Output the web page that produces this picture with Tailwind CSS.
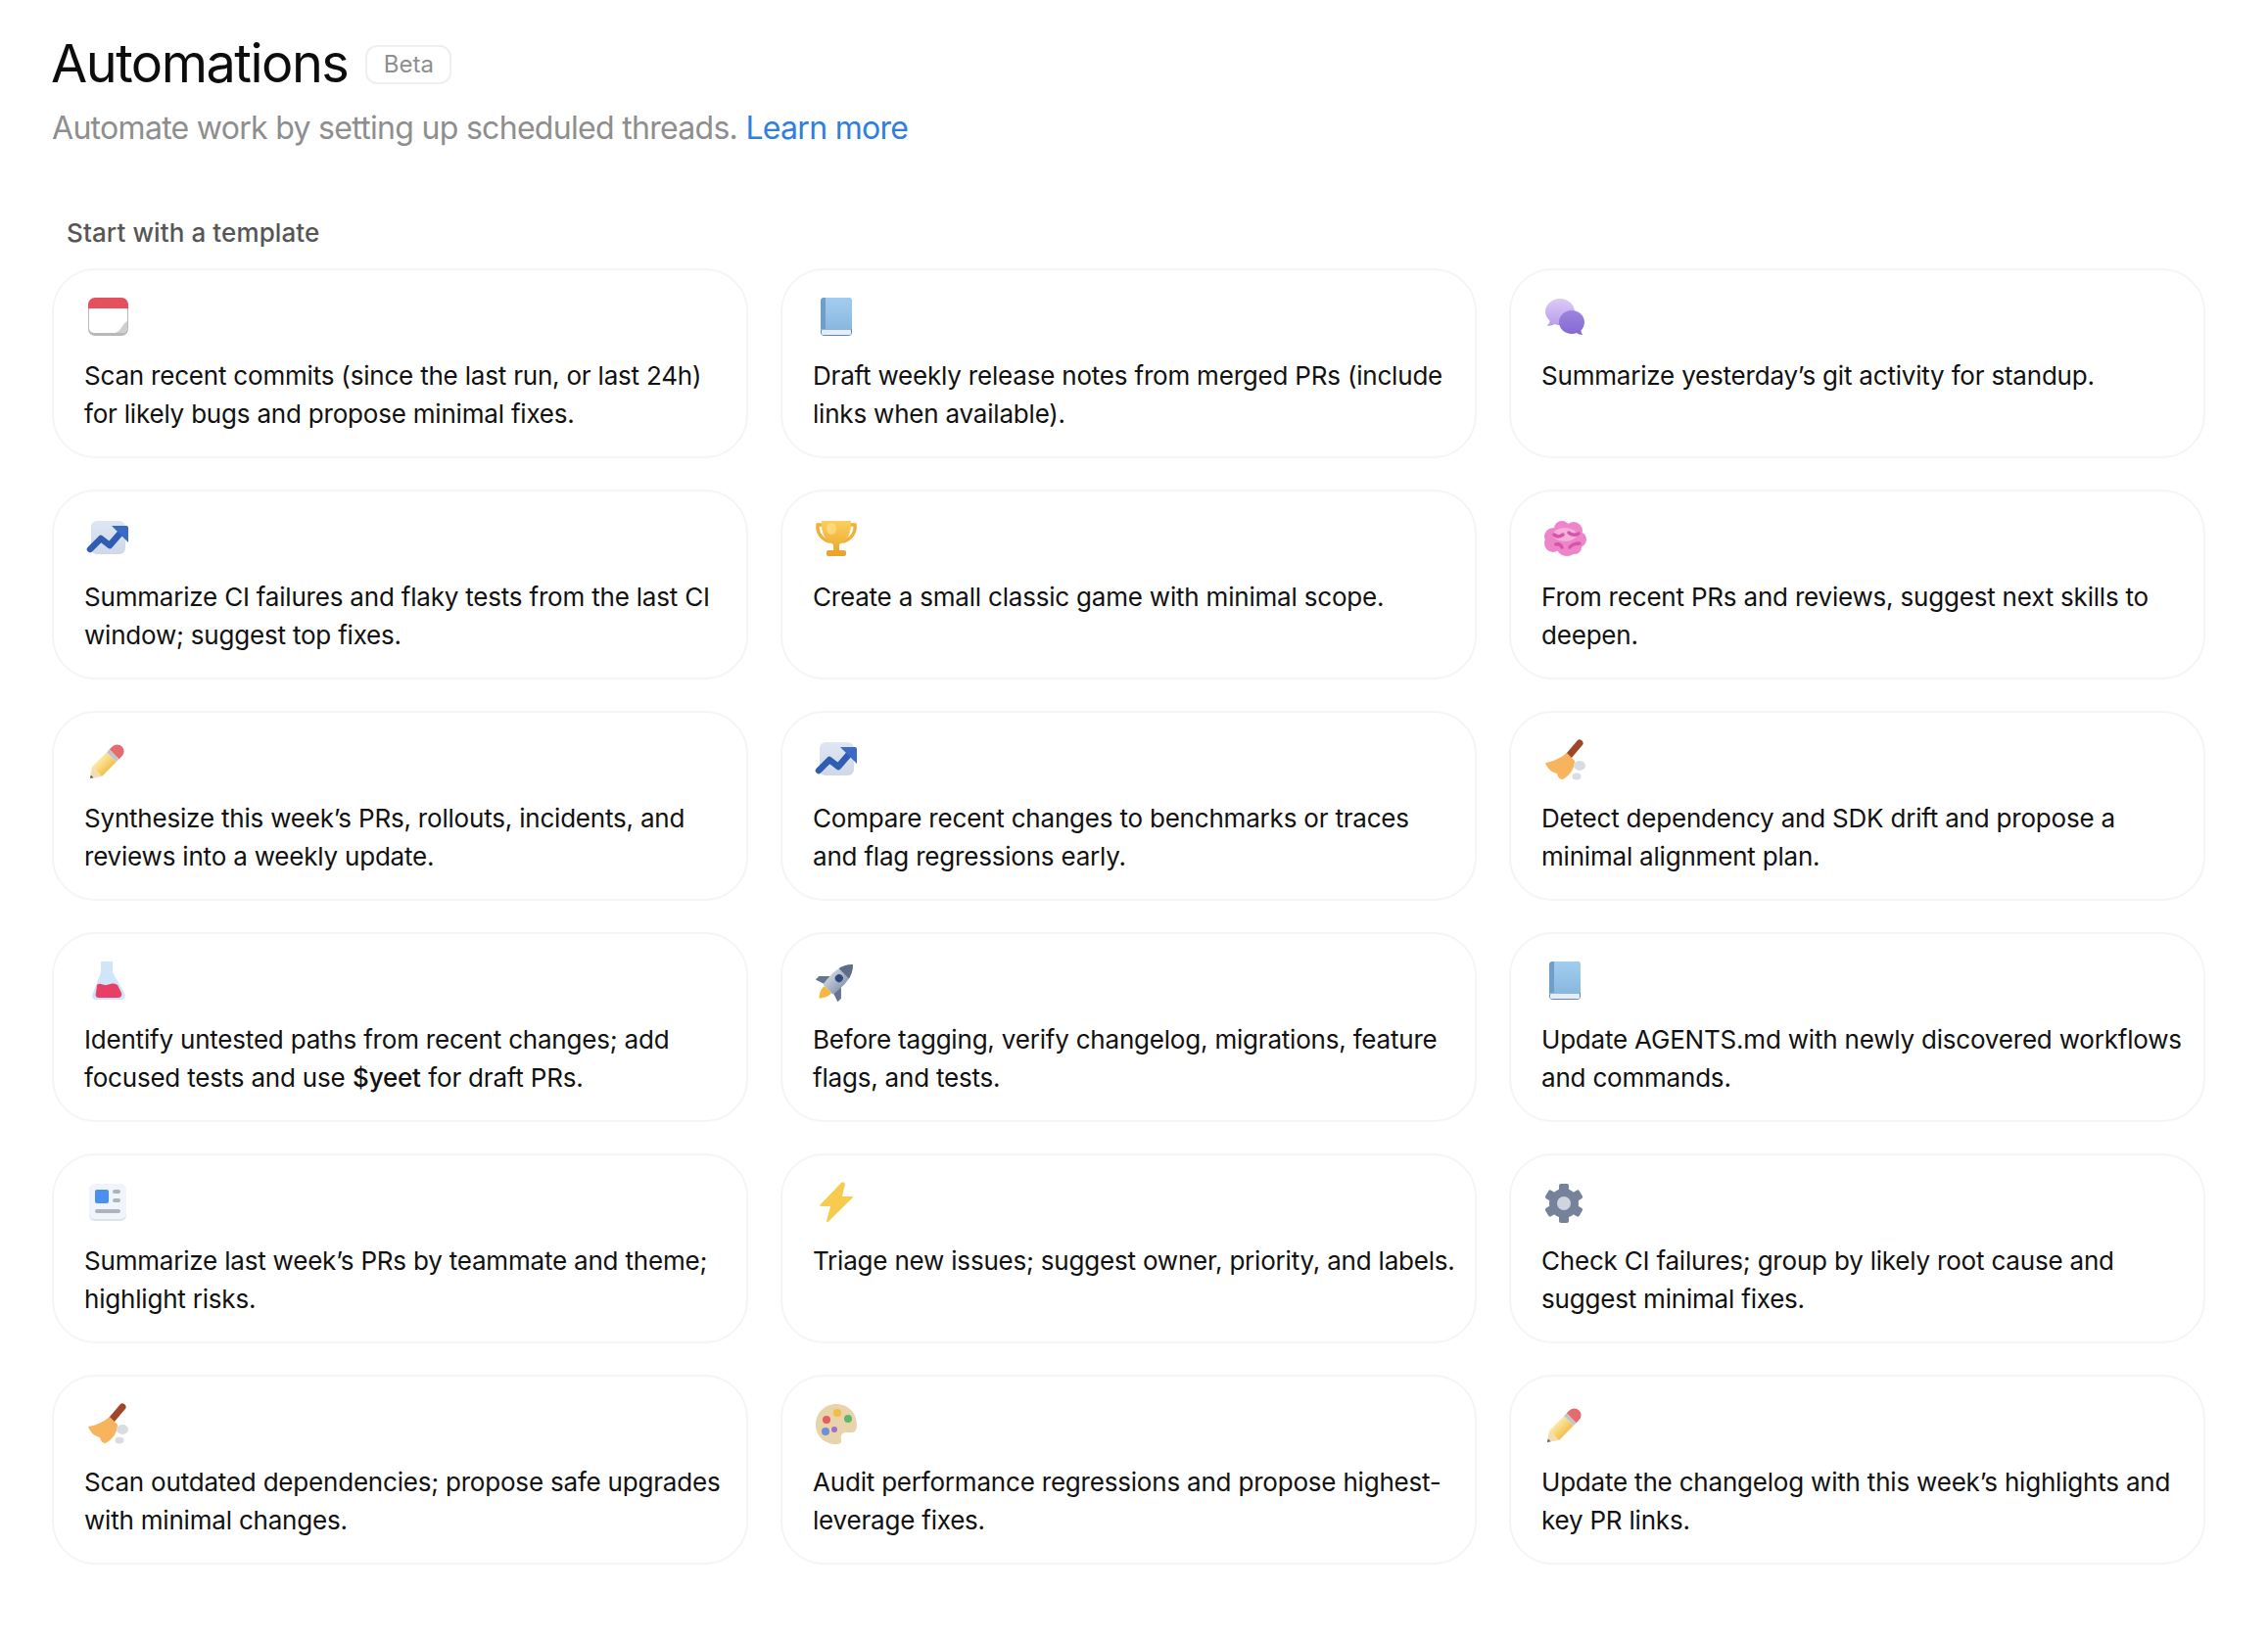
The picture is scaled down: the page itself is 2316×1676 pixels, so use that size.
<!doctype html>
<html>

<head>
    <meta charset="UTF-8">
    <title>Automations</title>
    <script src="https://cdn.jsdelivr.net/npm/@tailwindcss/browser@4"></script>
</head>

<body class="bg-white font-['Inter','Noto_Sans',sans-serif] text-[#111]">

    <!-- shared emoji drawings -->
    <svg class="absolute w-0 h-0" aria-hidden="true">
        <defs>
            <linearGradient id="g-book" x1="0" y1="0" x2="0" y2="1"><stop offset="0" stop-color="#a3cdef"/><stop offset="1" stop-color="#86b6de"/></linearGradient>
            <linearGradient id="g-trend" x1="0" y1="0" x2="0" y2="1"><stop offset="0" stop-color="#dfe6f3"/><stop offset="1" stop-color="#cfd8e8"/></linearGradient>
            <linearGradient id="g-gold" x1="0" y1="0" x2="0" y2="1"><stop offset="0" stop-color="#fbcf5c"/><stop offset="1" stop-color="#eda92f"/></linearGradient>
            <linearGradient id="g-pencil" x1="0" y1="0" x2="0" y2="1"><stop offset="0" stop-color="#fde9a4"/><stop offset="1" stop-color="#f2c050"/></linearGradient>
            <linearGradient id="g-bubble" x1="0" y1="0" x2="0" y2="1"><stop offset="0" stop-color="#dccbf7"/><stop offset="1" stop-color="#b89ceb"/></linearGradient>
            <linearGradient id="g-bubble2" x1="0" y1="0" x2="0" y2="1"><stop offset="0" stop-color="#9d84e0"/><stop offset="1" stop-color="#8468d2"/></linearGradient>
            <linearGradient id="g-rocket" x1="0" y1="0" x2="1" y2="0"><stop offset="0" stop-color="#c5cfdd"/><stop offset="1" stop-color="#8e9cb3"/></linearGradient>

            <symbol id="i-calendar" viewBox="0 0 48 48">
                <rect x="4" y="5" width="41" height="38" rx="7" fill="#b9b9bc"/>
                <rect x="5" y="12" width="39" height="28" rx="5" fill="#fff"/>
                <path d="M44 28v7a5 5 0 0 1-5 5h-8c7-1 7-9 13-12z" fill="#cfcfd3"/>
                <path d="M4 15v-4a7 7 0 0 1 7-7h27a7 7 0 0 1 7 7v4z" fill="#e5505f"/>
            </symbol>
            <symbol id="i-book" viewBox="0 0 48 48">
                <rect x="8" y="4" width="32" height="39" rx="4" fill="#5f86ac"/>
                <rect x="9" y="36" width="30" height="6" rx="1.500" fill="#e6edf4"/>
                <path d="M8 35V8a4 4 0 0 1 4-4h24a4 4 0 0 1 4 4v27a2 2 0 0 1-2 2H10a2 2 0 0 0-2 2z" fill="url(#g-book)"/>
                <path d="M8 37V8a4 4 0 0 1 4-4h1v32h-3a2 2 0 0 0-2 1z" fill="#6f9fc9"/>
            </symbol>
            <symbol id="i-chat" viewBox="0 0 48 48">
                <path d="M19 5c8 0 15 6 15 13.500S27 32 19 32c-2 0-4-.4-5.500-1-2 1.500-5 2-8 1.500 2-1 3-3 3-5C6 25 4 22 4 18.500 4 11 11 5 19 5z" fill="url(#g-bubble)"/>
                <path d="M31 17c7 0 13 5 13 12 0 3.500-1.500 6.500-3.500 8.500 0 1.500.5 3 2 4.500-3 0-5-.8-6.500-2-1.500.5-3.200 1-5 1-7 0-13-5.500-13-12s6-12 13-12z" fill="url(#g-bubble2)"/>
            </symbol>
            <symbol id="i-trend" viewBox="0 0 48 48">
                <rect x="7" y="6" width="35" height="34" rx="6" fill="url(#g-trend)"/>
                <path d="M6 35 17 24l9 7 13-15" fill="none" stroke="#2f5db3" stroke-width="6.500" stroke-linecap="round" stroke-linejoin="round"/>
                <path d="M28 11h15a2 2 0 0 1 2 2v15z" fill="#3a6ac6"/>
            </symbol>
            <symbol id="i-trophy" viewBox="0 0 48 48">
                <path d="M12 10H5c-1 8 4 15 12 17M36 10h7c1 8-4 15-12 17" fill="none" stroke="#eeb23c" stroke-width="3.500" stroke-linecap="round"/>
                <path d="M9 6h30c1 12-4 21-12 24v7h-6v-7C13 27 8 18 9 6z" fill="url(#g-gold)"/>
                <ellipse cx="19" cy="14" rx="5" ry="6" fill="#fde08f" opacity="0.7"/>
                <rect x="14" y="36" width="20" height="6" rx="2" fill="#e9a52f"/>
            </symbol>
            <symbol id="i-brain" viewBox="0 0 48 48">
                <g fill="#ee85c8">
                    <circle cx="12" cy="22" r="9"/>
                    <circle cx="21" cy="14" r="8"/>
                    <circle cx="33" cy="16" r="9"/>
                    <circle cx="38" cy="25" r="8"/>
                    <circle cx="12" cy="29" r="9"/>
                    <circle cx="26" cy="31" r="11"/>
                    <circle cx="34" cy="33" r="7"/>
                </g>
                <ellipse cx="24" cy="20" rx="12" ry="7" fill="#f6aedb"/>
                <path d="M13 20c4 3 6 2 9 0M15 30c3-1 5 1 6 3M29 33c3-4 7-4 10-4M28 18c3 3 6 3 10 1" fill="none" stroke="#d455a9" stroke-width="3.500" stroke-linecap="round"/>
            </symbol>
            <symbol id="i-pencil" viewBox="0 0 48 48">
                <g transform="translate(6 43) rotate(-45)">
                    <path d="M0 0 10-7v14z" fill="#f3dcb0"/>
                    <path d="M0 0 3-2v4z" fill="#5d6068"/>
                    <rect x="10" y="-7" width="21" height="14" fill="url(#g-pencil)"/>
                    <rect x="31" y="-7" width="4" height="14" fill="#c3c5c9"/>
                    <path d="M35-7h4a7 7 0 0 1 7 7 7 7 0 0 1-7 7h-4z" fill="#e46c70"/>
                </g>
            </symbol>
            <symbol id="i-broom" viewBox="0 0 48 48">
                <path d="M39 7 28 20" stroke="#a0472a" stroke-width="7" stroke-linecap="round" fill="none"/>
                <path d="M4 27c8-1 16-5 22-10l8 8c0 8-5 15-12 19-4 0-5-3-6-6-5-1-10-5-12-11z" fill="#f7b45c"/>
                <ellipse cx="39" cy="30" rx="6" ry="5" fill="#d8dde4"/>
                <ellipse cx="36" cy="41" rx="4.500" ry="3.500" fill="#d8dde4"/>
            </symbol>
            <symbol id="i-flask" viewBox="0 0 48 48">
                <path d="M17 4h12v11l12 21c2 4 0 7-4 7H13c-4 0-6-3-4-7l8-21z" fill="#cfe6f8"/>
                <path d="M13 28c4-3 6 1 10 0s6-3 11 0l4 8c1 3-1 5-3 5H15c-3 0-4-2-3-5z" fill="#e83f68"/>
            </symbol>
            <symbol id="i-rocket" viewBox="0 0 48 48">
                <g transform="translate(24 24) rotate(45)">
                    <path d="M-5 12c-1 6 3 10 5 13 2-3 6-7 5-13z" fill="#f6b73c"/>
                    <path d="M-7 0-16 9l0 5 9-3z" fill="#66758f"/>
                    <path d="M7 0 16 9l0 5-9-3z" fill="#66758f"/>
                    <path d="M0-24C8-16 10-4 7 12H-7C-10-4-8-16 0-24z" fill="url(#g-rocket)"/>
                    <path d="M0-24c4 4 6 8 7.400 13H-7.400C-6-16-4-20 0-24z" fill="#5f6e88"/>
                    <circle cx="0" cy="-4" r="4" fill="#2f4a7a"/>
                </g>
            </symbol>
            <symbol id="i-news" viewBox="0 0 48 48">
                <rect x="5" y="6" width="38" height="37" rx="6" fill="#dfe3ec"/>
                <rect x="5" y="5" width="38" height="36" rx="6" fill="#f1f4fa"/>
                <rect x="11" y="11" width="14" height="14" rx="2" fill="#4a90ee"/>
                <rect x="29" y="11" width="8" height="4" rx="2" fill="#aeb4bf"/>
                <rect x="29" y="20" width="8" height="4" rx="2" fill="#aeb4bf"/>
                <rect x="11" y="31" width="26" height="4" rx="2" fill="#aeb4bf"/>
            </symbol>
            <symbol id="i-bolt" viewBox="0 0 48 48">
                <path d="M29 4 8 26a1 1 0 0 0 1 2h9l-4 15c0 1 1 1.500 2 .5L40 20a1 1 0 0 0-1-2h-9l3-13c0-1-3-2-4-1z" fill="#f7cb4d"/>
            </symbol>
            <symbol id="i-gear" viewBox="0 0 48 48">
                <g fill="#76829a" transform="translate(23 25)">
                    <circle r="15"/>
                    <rect x="-5" y="-20" width="10" height="9" rx="2"/>
                    <rect x="-5" y="-20" width="10" height="9" rx="2" transform="rotate(60)"/>
                    <rect x="-5" y="-20" width="10" height="9" rx="2" transform="rotate(120)"/>
                    <rect x="-5" y="-20" width="10" height="9" rx="2" transform="rotate(180)"/>
                    <rect x="-5" y="-20" width="10" height="9" rx="2" transform="rotate(240)"/>
                    <rect x="-5" y="-20" width="10" height="9" rx="2" transform="rotate(300)"/>
                    <circle r="7" fill="#cfd5df"/>
                </g>
            </symbol>
            <symbol id="i-palette" viewBox="0 0 48 48">
                <path d="M24 4C12 4 3 13 3 25s9 20 21 20c4 0 6-2 5-5-1-4 1-7 5-7h6c3 0 5-3 5-8C45 13 36 4 24 4z" fill="#e8d3ab"/>
                <circle cx="14" cy="20" r="4" fill="#e2605f"/>
                <circle cx="25" cy="13" r="4" fill="#f2bd45"/>
                <circle cx="36" cy="19" r="4" fill="#5fb56b"/>
                <circle cx="13" cy="32" r="4" fill="#6a8fdc"/>
                <circle cx="22" cy="30" r="3" fill="#a36bd0"/>
            </symbol>
        </defs>
    </svg>

    <div class="pl-[53px] pr-[64px] pt-[28px]">

        <div class="flex items-center gap-[18px] h-[74px]">
            <h1 class="-ml-[1px] text-[54px] leading-none font-normal tracking-[-1.5px] text-[#0d0d0d]">Automations</h1>
            <span class="mt-[2px] flex items-center justify-center w-[88px] h-[40px] rounded-[12px] border-2 border-[#efefef] text-[24px] text-[#8f8f8f]">Beta</span>
        </div>

        <p class="mt-[7px] text-[32px] leading-[44px] tracking-[-0.7px] text-[#8e8e8e]">Automate work by setting up scheduled threads. <a href="#" class="text-[#2f7ee0]">Learn more</a></p>

        <h2 class="mt-[67px] ml-[15px] text-[26px] leading-[36px] font-medium tracking-[0.1px] text-[#565656]">Start with a template</h2>

        <div class="mt-[18px] grid grid-cols-3 gap-x-[33px] gap-y-[32px] text-[26px] leading-[39px] tracking-[-0.2px]">

            <div class="h-[194px] rounded-[44px] border-2 border-[#f5f5f5] pl-[31px] pr-[20px] pt-[24px]">
                <svg class="w-[48px] h-[48px] blur-[0.4px]"><use href="#i-calendar"/></svg>
                <p class="mt-[16px]">Scan recent commits (since the last run, or last 24h) for likely bugs and propose minimal fixes.</p>
            </div>
            <div class="h-[194px] rounded-[44px] border-2 border-[#f5f5f5] pl-[31px] pr-[20px] pt-[24px]">
                <svg class="w-[48px] h-[48px] blur-[0.4px]"><use href="#i-book"/></svg>
                <p class="mt-[16px]">Draft weekly release notes from merged PRs (include links when available).</p>
            </div>
            <div class="h-[194px] rounded-[44px] border-2 border-[#f5f5f5] pl-[31px] pr-[20px] pt-[24px]">
                <svg class="w-[48px] h-[48px] blur-[0.4px]"><use href="#i-chat"/></svg>
                <p class="mt-[16px]">Summarize yesterday’s git activity for standup.</p>
            </div>

            <div class="h-[194px] rounded-[44px] border-2 border-[#f5f5f5] pl-[31px] pr-[20px] pt-[24px]">
                <svg class="w-[48px] h-[48px] blur-[0.4px]"><use href="#i-trend"/></svg>
                <p class="mt-[16px]">Summarize CI failures and flaky tests from the last CI window; suggest top fixes.</p>
            </div>
            <div class="h-[194px] rounded-[44px] border-2 border-[#f5f5f5] pl-[31px] pr-[20px] pt-[24px]">
                <svg class="w-[48px] h-[48px] blur-[0.4px]"><use href="#i-trophy"/></svg>
                <p class="mt-[16px]">Create a small classic game with minimal scope.</p>
            </div>
            <div class="h-[194px] rounded-[44px] border-2 border-[#f5f5f5] pl-[31px] pr-[20px] pt-[24px]">
                <svg class="w-[48px] h-[48px] blur-[0.4px]"><use href="#i-brain"/></svg>
                <p class="mt-[16px]">From recent PRs and reviews, suggest next skills to deepen.</p>
            </div>

            <div class="h-[194px] rounded-[44px] border-2 border-[#f5f5f5] pl-[31px] pr-[20px] pt-[24px]">
                <svg class="w-[48px] h-[48px] blur-[0.4px]"><use href="#i-pencil"/></svg>
                <p class="mt-[16px]">Synthesize this week’s PRs, rollouts, incidents, and reviews into a weekly update.</p>
            </div>
            <div class="h-[194px] rounded-[44px] border-2 border-[#f5f5f5] pl-[31px] pr-[20px] pt-[24px]">
                <svg class="w-[48px] h-[48px] blur-[0.4px]"><use href="#i-trend"/></svg>
                <p class="mt-[16px]">Compare recent changes to benchmarks or traces and flag regressions early.</p>
            </div>
            <div class="h-[194px] rounded-[44px] border-2 border-[#f5f5f5] pl-[31px] pr-[20px] pt-[24px]">
                <svg class="w-[48px] h-[48px] blur-[0.4px]"><use href="#i-broom"/></svg>
                <p class="mt-[16px]">Detect dependency and SDK drift and propose a minimal alignment plan.</p>
            </div>

            <div class="h-[194px] rounded-[44px] border-2 border-[#f5f5f5] pl-[31px] pr-[20px] pt-[24px]">
                <svg class="w-[48px] h-[48px] blur-[0.4px]"><use href="#i-flask"/></svg>
                <p class="mt-[16px]">Identify untested paths from recent changes; add focused tests and use <span class="mx-[0.5px] font-medium">$yeet</span> for draft PRs.</p>
            </div>
            <div class="h-[194px] rounded-[44px] border-2 border-[#f5f5f5] pl-[31px] pr-[20px] pt-[24px]">
                <svg class="w-[48px] h-[48px] blur-[0.4px]"><use href="#i-rocket"/></svg>
                <p class="mt-[16px]">Before tagging, verify changelog, migrations, feature flags, and tests.</p>
            </div>
            <div class="h-[194px] rounded-[44px] border-2 border-[#f5f5f5] pl-[31px] pr-[20px] pt-[24px]">
                <svg class="w-[48px] h-[48px] blur-[0.4px]"><use href="#i-book"/></svg>
                <p class="mt-[16px]">Update AGENTS.md with newly discovered workflows and commands.</p>
            </div>

            <div class="h-[194px] rounded-[44px] border-2 border-[#f5f5f5] pl-[31px] pr-[20px] pt-[24px]">
                <svg class="w-[48px] h-[48px] blur-[0.4px]"><use href="#i-news"/></svg>
                <p class="mt-[16px]">Summarize last week’s PRs by teammate and theme; highlight risks.</p>
            </div>
            <div class="h-[194px] rounded-[44px] border-2 border-[#f5f5f5] pl-[31px] pr-[20px] pt-[24px]">
                <svg class="w-[48px] h-[48px] blur-[0.4px]"><use href="#i-bolt"/></svg>
                <p class="mt-[16px]">Triage new issues; suggest owner, priority, and labels.</p>
            </div>
            <div class="h-[194px] rounded-[44px] border-2 border-[#f5f5f5] pl-[31px] pr-[20px] pt-[24px]">
                <svg class="w-[48px] h-[48px] blur-[0.4px]"><use href="#i-gear"/></svg>
                <p class="mt-[16px]">Check CI failures; group by likely root cause and suggest minimal fixes.</p>
            </div>

            <div class="h-[194px] rounded-[44px] border-2 border-[#f5f5f5] pl-[31px] pr-[20px] pt-[24px]">
                <svg class="w-[48px] h-[48px] blur-[0.4px]"><use href="#i-broom"/></svg>
                <p class="mt-[16px]">Scan outdated dependencies; propose safe upgrades with minimal changes.</p>
            </div>
            <div class="h-[194px] rounded-[44px] border-2 border-[#f5f5f5] pl-[31px] pr-[20px] pt-[24px]">
                <svg class="w-[48px] h-[48px] blur-[0.4px]"><use href="#i-palette"/></svg>
                <p class="mt-[16px]">Audit performance regressions and propose highest-leverage fixes.</p>
            </div>
            <div class="h-[194px] rounded-[44px] border-2 border-[#f5f5f5] pl-[31px] pr-[20px] pt-[24px]">
                <svg class="w-[48px] h-[48px] blur-[0.4px]"><use href="#i-pencil"/></svg>
                <p class="mt-[16px]">Update the changelog with this week’s highlights and key PR links.</p>
            </div>

        </div>
    </div>

</body>

</html>
